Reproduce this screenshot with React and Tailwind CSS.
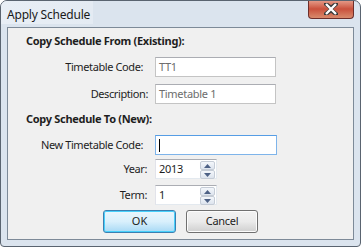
import React from "react";

const font = { fontFamily: '"Noto Sans", "Open Sans", sans-serif' };

function Spinner() {
  return (
    <div className="flex flex-col w-[16px] h-[20px] py-[1px] pr-[1px]">
      <div className="flex-1 border border-[#c5ccd6] rounded-[2px] bg-gradient-to-b from-[#f4f7fb] to-[#dde4ee] flex items-center justify-center">
        <svg width="7" height="4" viewBox="0 0 7 4"><path d="M0 4 L3.5 0 L7 4 Z" fill="#4d6185" /></svg>
      </div>
      <div className="flex-1 border border-[#c5ccd6] rounded-[2px] bg-gradient-to-b from-[#f4f7fb] to-[#dde4ee] flex items-center justify-center">
        <svg width="7" height="4" viewBox="0 0 7 4"><path d="M0 0 L3.5 4 L7 0 Z" fill="#4d6185" /></svg>
      </div>
    </div>
  );
}

function Row({ label, pr, mt, children }) {
  return (
    <div className="flex items-center" style={{ marginTop: mt }}>
      <div className="w-[147px] text-right text-[11px] tracking-[-0.4px] text-[#1e1e1e]" style={{ paddingRight: pr }}>
        {label}
      </div>
      {children}
    </div>
  );
}

export default function App() {
  return (
    <div className="w-[361px] h-[247px] bg-white" style={font}>
      <div className="w-[361px] h-[247px] border border-[#5a6470] rounded-t-[7px] rounded-b-[4px] bg-[#dbe4ee] flex flex-col overflow-hidden">
        <div className="h-[26px] flex items-start relative">
          <div className="pl-[6px] pt-[5px] text-[12px] tracking-[-0.2px] text-[#1a1a1a] leading-[18px] bg-gradient-to-r from-[#e8eef5] to-[#e4ebf3] pr-[3px]">
            Apply Schedule
          </div>
          <div className="flex-1" />
          <div className="mr-[6px] w-[46px] h-[19px] -mt-[1px] rounded-b-[4px] border border-[#6d2e2a] border-t-0 bg-gradient-to-b from-[#e6a08e] via-[#c9503c] to-[#d88a6c] flex items-center justify-center">
            <svg width="14" height="12" viewBox="0 0 14 12">
              <path d="M2 1 L7 5 L12 1 M2 11 L7 7 L12 11" stroke="#3b3b3b" strokeWidth="4.2" fill="none" strokeLinecap="square" />
              <path d="M2 1 L12 11 M12 1 L2 11" stroke="#ffffff" strokeWidth="2.4" fill="none" />
            </svg>
          </div>
        </div>
        <div className="mx-[6px] flex-1 mb-[6px] border border-[#7d8a98] bg-[#f0f0f0] flex flex-col">
          <div className="pl-[18px] mt-[5px] h-[16px] leading-[16px] text-[11px] tracking-[-0.3px] font-bold text-[#1e1e1e]">
            Copy Schedule From (Existing):
          </div>
          <Row label="Timetable Code:" pr={12} mt={8}>
            <div className="w-[121px] h-[20px] border border-[#c4c4c4] border-t-[#abadb3] bg-white text-[11px] tracking-[-0.3px] text-[#6d6d6d] pl-[3px] leading-[18px]">TT1</div>
          </Row>
          <Row label="Description:" pr={7} mt={7}>
            <div className="w-[121px] h-[20px] border border-[#c4c4c4] border-t-[#abadb3] bg-white text-[11px] tracking-[-0.3px] text-[#6d6d6d] pl-[3px] leading-[18px]">Timetable 1</div>
          </Row>
          <div className="pl-[18px] mt-[7px] h-[16px] leading-[16px] text-[11px] tracking-[-0.3px] font-bold text-[#1e1e1e]">
            Copy Schedule To (New):
          </div>
          <Row label="New Timetable Code:" pr={12} mt={8}>
            <div className="w-[122px] h-[20px] border border-[#7eb4ea] border-t-[#569de5] bg-white pl-[3px] flex items-center">
              <div className="w-[1px] h-[13px] bg-black" />
            </div>
          </Row>
          <Row label="Year:" pr={8} mt={4}>
            <div className="w-[62px] h-[20px] border border-[#e3e9ef] border-t-[#abadb3] border-l-[#e2e3ea] bg-white flex">
              <div className="flex-1 text-[11px] tracking-[-0.3px] text-[#1e1e1e] pl-[3px] leading-[18px]">2013</div>
              <Spinner />
            </div>
          </Row>
          <Row label="Term:" pr={8} mt={6}>
            <div className="w-[62px] h-[20px] border border-[#e3e9ef] border-t-[#abadb3] border-l-[#e2e3ea] bg-white flex">
              <div className="flex-1 text-[11px] text-[#1e1e1e] pl-[3px] leading-[18px]">1</div>
              <Spinner />
            </div>
          </Row>
          <div className="flex mt-[5px] pl-[95px] gap-[10px]">
            <div className="w-[73px] h-[23px] rounded-[3px] border border-[#3c7fb1] shadow-[inset_0_0_0_1px_#48d0fb] bg-gradient-to-b from-[#eaf6fd] via-[#d9f0fc] to-[#a7d9f5] flex items-center justify-center text-[11px] text-[#1e1e1e]">
              OK
            </div>
            <div className="w-[72px] h-[23px] rounded-[3px] border border-[#707070] shadow-[inset_0_0_0_1px_#fcfcfc] bg-gradient-to-b from-[#f2f2f2] via-[#ebebeb] to-[#cfcfcf] flex items-center justify-center text-[11px] tracking-[-0.3px] text-[#1e1e1e]">
              Cancel
            </div>
          </div>
        </div>
      </div>
    </div>
  );
}
